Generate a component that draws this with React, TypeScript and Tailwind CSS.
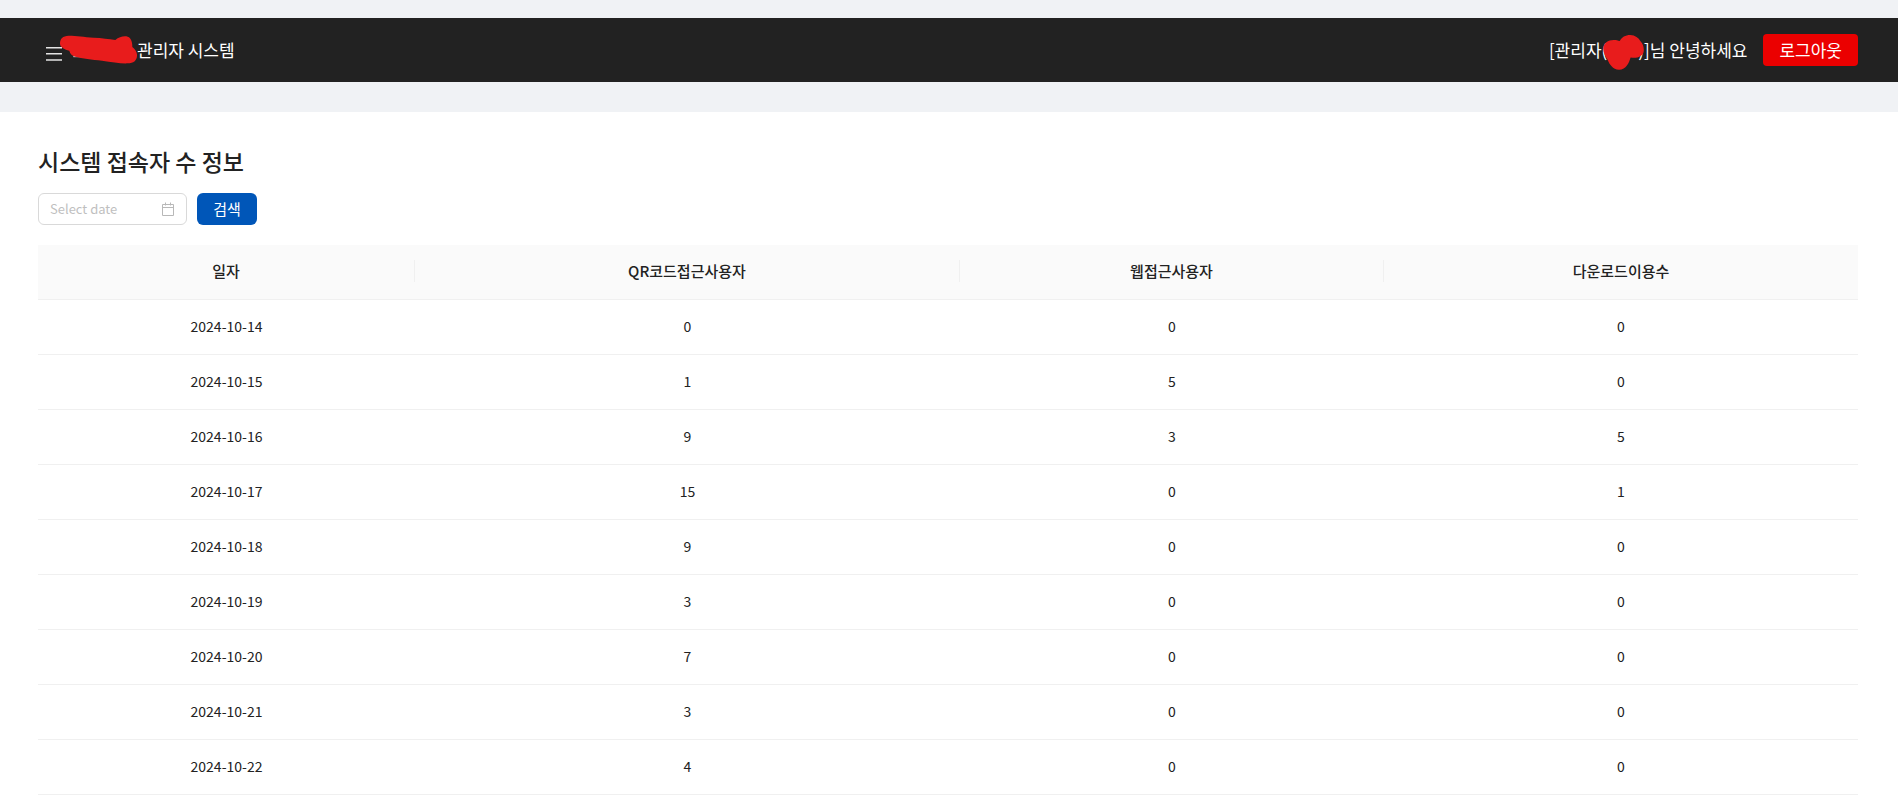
import { useState } from 'react';

interface VisitorRow {
  date: string;
  qr: number;
  web: number;
  download: number;
}

const visitors: VisitorRow[] = [
  { date: '2024-10-14', qr: 0, web: 0, download: 0 },
  { date: '2024-10-15', qr: 1, web: 5, download: 0 },
  { date: '2024-10-16', qr: 9, web: 3, download: 5 },
  { date: '2024-10-17', qr: 15, web: 0, download: 1 },
  { date: '2024-10-18', qr: 9, web: 0, download: 0 },
  { date: '2024-10-19', qr: 3, web: 0, download: 0 },
  { date: '2024-10-20', qr: 7, web: 0, download: 0 },
  { date: '2024-10-21', qr: 3, web: 0, download: 0 },
  { date: '2024-10-22', qr: 4, web: 0, download: 0 },
];

const columns = [
  { label: '일자', width: 'w-[377px]' },
  { label: 'QR코드접근사용자', width: 'w-[545px]' },
  { label: '웹접근사용자', width: 'w-[424px]' },
  { label: '다운로드이용수', width: 'w-[474px]' },
];

const cellClass = 'border-b border-[#f0f0f0] pt-[15px] pb-[17px]';

function MenuIcon() {
  return (
    <svg width="16" height="16" viewBox="0 0 16 16" fill="none" stroke="#e4e4e4" strokeWidth="1.4" aria-hidden="true">
      <path d="M0 1.8h16M0 7.8h16M0 14h16" />
    </svg>
  );
}

function CalendarIcon() {
  return (
    <svg width="14" height="14" viewBox="0 0 14 14" fill="none" stroke="#b8b8b8" aria-hidden="true">
      <path d="M1.5 2.5h11v11h-11zM1.5 5.5h11M4.5 0.5v3M9.5 0.5v3" />
    </svg>
  );
}

// Red marker covering the organisation name
function NameMask() {
  return (
    <svg className="-ml-0.5 -mt-0.5" width="77" height="29" viewBox="179 104 231 87" aria-hidden="true">
      <path d="M219 169h30" stroke="#e8e8e8" strokeWidth="3" />
      <path
        fill="#e81c1c"
        d="M179 130C179 115 187 107 205 106C230 106 250 110 280 112C305 113 325 116 345 119C355 110 367 107 378 108C390 110 396 122 396 140C404 147 411 155 410 167C409 181 400 189 382 189C360 190 335 185 305 181C275 178 245 174 225 169C214 166 209 159 207 151C193 147 180 142 179 130Z"
      />
    </svg>
  );
}

// Red marker covering the account id
function AccountMask() {
  return (
    <svg className="relative -ml-1 -mr-1.5 mt-1" width="41" height="35" viewBox="308 104 123 106" aria-hidden="true">
      <path
        fill="#e81c1c"
        d="M308 145C309 128 322 119 340 119C347 119 353 121 358 122C364 111 375 104 390 104C405 105 415 112 421 123C429 132 433 144 430 157C426 169 410 176 391 172C386 188 378 209 356 209C337 208 327 193 321 178C314 168 308 158 308 145Z"
      />
    </svg>
  );
}

export default function App() {
  const [date, setDate] = useState('');

  return (
    <div className="min-h-screen bg-[#f0f2f5] pt-[18px] text-[#222222] font-['Noto_Sans_CJK_KR',sans-serif]">
      <header className="flex h-16 items-center justify-between bg-[#222222] px-10 text-[17px] text-white">
        <div className="flex items-center">
          <button type="button" aria-label="메뉴" className="mt-2 pl-1.5">
            <MenuIcon />
          </button>
          <NameMask />
          <span>관리자 시스템</span>
        </div>
        <div className="flex items-center gap-4">
          <p className="flex items-center">
            <span>[관리자(</span>
            <AccountMask />
            <span>)]님 안녕하세요</span>
          </p>
          <button type="button" className="h-8 rounded bg-[#eb0000] px-4 leading-8">
            로그아웃
          </button>
        </div>
      </header>

      <main className="mt-[30px] bg-white pb-8 pl-[38px] pr-10 pt-8">
        <h1 className="text-[23px] font-medium leading-[34px]">시스템 접속자 수 정보</h1>

        <form className="mt-[15px] flex gap-[10px]" onSubmit={(e) => e.preventDefault()}>
          <label className="flex h-8 w-[149px] items-center rounded-md border border-[#d9d9d9] px-[11px]">
            <input
              type="text"
              aria-label="날짜"
              placeholder="Select date"
              value={date}
              onChange={(e) => setDate(e.target.value)}
              className="min-w-0 flex-1 text-[13px] outline-none placeholder:text-[#bfbfbf]"
            />
            <CalendarIcon />
          </label>
          <button type="submit" className="h-8 w-[60px] rounded-md bg-[#0056b8] text-[15px] leading-[30px] text-white">
            검색
          </button>
        </form>

        <table className="mt-5 w-full table-fixed border-separate border-spacing-0 text-center text-[14px] leading-[22px]">
          <thead>
            <tr>
              {columns.map((col) => (
                <th
                  key={col.label}
                  scope="col"
                  className={`group bg-[#fafafa] text-[15px] font-medium ${cellClass} ${col.width}`}
                >
                  <div className="h-[22px] border-r border-[#f0f0f0] group-last:border-r-0">{col.label}</div>
                </th>
              ))}
            </tr>
          </thead>
          <tbody>
            {visitors.map((row) => (
              <tr key={row.date}>
                <td className={cellClass}>{row.date}</td>
                <td className={cellClass}>{row.qr}</td>
                <td className={cellClass}>{row.web}</td>
                <td className={cellClass}>{row.download}</td>
              </tr>
            ))}
          </tbody>
        </table>
      </main>
    </div>
  );
}
